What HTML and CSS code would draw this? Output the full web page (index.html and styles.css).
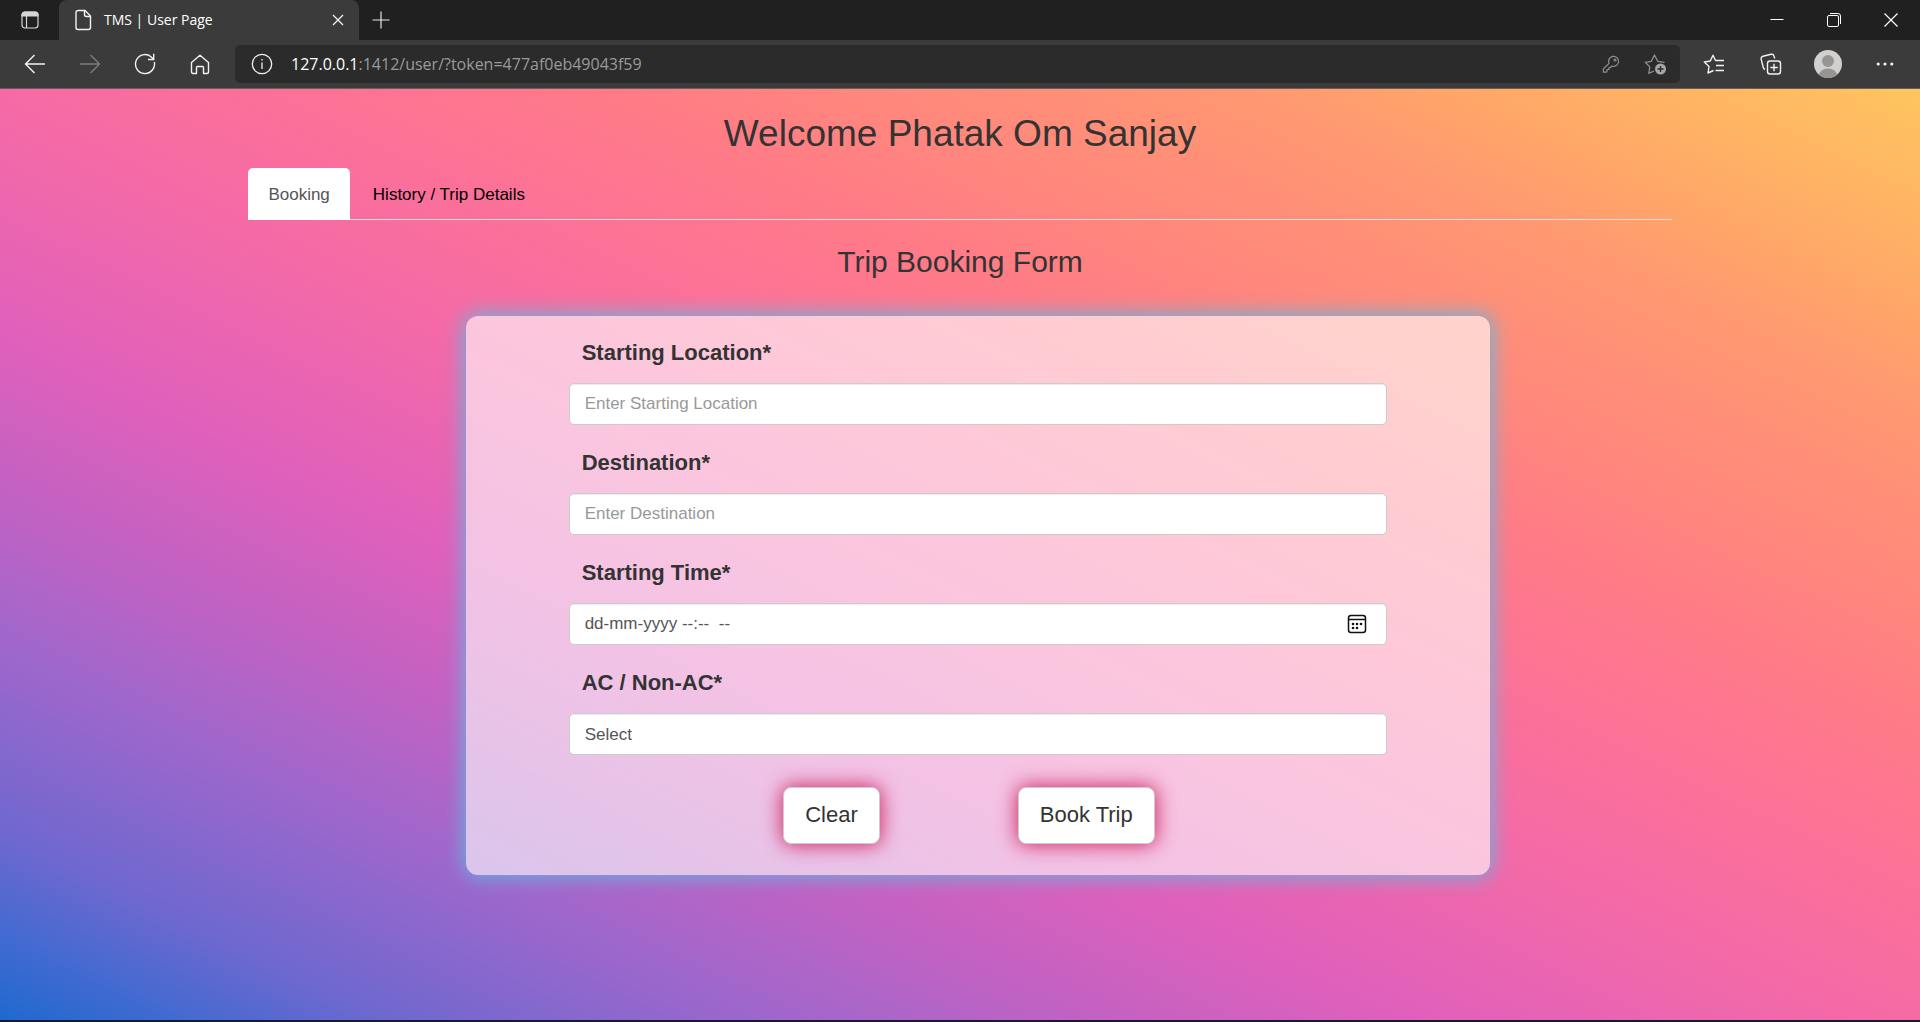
FILE: index.html
```html
<!DOCTYPE html>
<html lang="en">
<head>
<meta charset="utf-8">
<title>TMS | User Page</title>
<meta name="viewport" content="width=device-width, initial-scale=1">
<link rel="stylesheet" href="styles.css">
</head>
<body>
<header class="browser">
  <div class="tabstrip">
    <button class="chrome-btn tab-actions" aria-label="Tab actions">
      <svg width="20" height="20" viewBox="0 0 20 20" fill="none" stroke="#d6d6d6" stroke-width="1.2"><rect x="2" y="2" width="16" height="16" rx="3"/><path d="M2 6V5a3 3 0 0 1 3-3h10a3 3 0 0 1 3 3v1z" fill="#d6d6d6"/><path d="M6.500 6v12"/></svg>
    </button>
    <div class="tab">
      <svg width="18" height="22" viewBox="0 0 18 22" fill="none" stroke="#f2f2f2" stroke-width="1.400"><path d="M4 1.500h7l5.500 5.500v11.500a2 2 0 0 1-2 2H4a2 2 0 0 1-2-2v-15a2 2 0 0 1 2-2z"/><path d="M10.500 1.500v4a2 2 0 0 0 2 2h4"/></svg>
      <span class="tab-title">TMS | User Page</span>
      <button class="chrome-btn tab-close" aria-label="Close tab">
        <svg width="12" height="12" viewBox="0 0 12 12" stroke="#f2f2f2" stroke-width="1.300"><path d="M1 1l10 10M11 1L1 11"/></svg>
      </button>
    </div>
    <button class="chrome-btn new-tab" aria-label="New tab">
      <svg width="18" height="18" viewBox="0 0 18 18" stroke="#e6e6e6" stroke-width="1.200"><path d="M9 .5v17M.5 9h17"/></svg>
    </button>
    <div class="window-controls">
      <button class="chrome-btn" aria-label="Minimize"><svg width="14" height="14" viewBox="0 0 14 14" stroke="#fff"><path d="M.5 6.500h13"/></svg></button>
      <button class="chrome-btn" aria-label="Restore"><svg width="14" height="14" viewBox="0 0 14 14" fill="none" stroke="#fff"><rect x=".5" y="2.500" width="11" height="11" rx="1.500"/><path d="M3 .5h8a2.500 2.500 0 0 1 2.500 2.500v8"/></svg></button>
      <button class="chrome-btn" aria-label="Close"><svg width="14" height="14" viewBox="0 0 14 14" stroke="#fff" stroke-width="1.200"><path d="M.5.5l13 13M13.500.5L.5 13.500"/></svg></button>
    </div>
  </div>
  <div class="toolbar">
    <div class="nav-buttons">
      <button class="chrome-btn" aria-label="Back"><svg width="22" height="20" viewBox="0 0 22 20" fill="none" stroke="#f2f2f2" stroke-width="1.400"><path d="M10.500 1L1.500 10l9 9M1.500 10H21"/></svg></button>
      <button class="chrome-btn" aria-label="Forward"><svg width="22" height="20" viewBox="0 0 22 20" fill="none" stroke="#7c7c7c" stroke-width="1.400"><path d="M11.500 1l9 9-9 9M20.500 10H1"/></svg></button>
      <button class="chrome-btn" aria-label="Refresh"><svg width="22" height="22" viewBox="0 0 22 22" fill="none" stroke="#f2f2f2" stroke-width="1.400"><path d="M20.300 9A9.500 9.500 0 1 1 17 3.700l2.500 2.500"/><path d="M19.700.8v5.700H14"/></svg></button>
      <button class="chrome-btn" aria-label="Home"><svg width="20" height="21" viewBox="0 0 20 21" fill="none" stroke="#f2f2f2" stroke-width="1.400" stroke-linejoin="round"><path d="M1.500 8.500L10 1.300l8.500 7.200V18a1.500 1.500 0 0 1-1.500 1.500h-3.500v-6a1 1 0 0 0-1-1h-5a1 1 0 0 0-1 1v6H3A1.500 1.500 0 0 1 1.500 18z"/></svg></button>
    </div>
    <div class="address">
      <svg width="22" height="22" viewBox="0 0 22 22" fill="none" stroke="#f2f2f2" stroke-width="1.300"><circle cx="11" cy="11" r="9.700"/><path d="M11 9.500v6.500M11 6v1.600"/></svg>
      <div class="url"><span class="url-host">127.0.0.1</span>:1412/user/?token=477af0eb49043f59</div>
      <button class="chrome-btn" aria-label="Saved passwords"><svg width="18" height="18" viewBox="0 0 18 18" fill="none" stroke="#8f8f8f" stroke-width="1.200" stroke-linejoin="round"><path d="M7 8.300A5 5 0 1 1 9.900 11L8.500 12.500H7v2H5v2l-.8.700H1.300V14z"/><circle cx="13" cy="5" r="1"/></svg></button>
      <button class="chrome-btn" aria-label="Add to favorites"><svg width="24" height="22" viewBox="0 0 24 22" fill="none" stroke="#8f8f8f" stroke-width="1.300" stroke-linejoin="round"><path d="M10 18l-5.200 2.300 1-6.400L1.300 9.300l6-1L10.500 2l3.200 6.300 6.800 1"/><circle cx="16.500" cy="16" r="5.500" fill="#a6a6a6" stroke="none"/><path d="M16.500 13v6M13.500 16h6" stroke="#2b2b2b"/></svg></button>
    </div>
    <div class="toolbar-actions">
      <button class="chrome-btn" aria-label="Favorites"><svg width="22" height="20" viewBox="0 0 22 20" fill="none" stroke="#f2f2f2" stroke-width="1.400" stroke-linejoin="round"><path d="M10.500 16.500L5 19l1-6.500L1.300 8l6-1L10 1.300 12.500 6.500H21M13 11.500h8M12.500 16.500H21"/></svg></button>
      <button class="chrome-btn" aria-label="Collections"><svg width="22" height="22" viewBox="0 0 22 22" fill="none" stroke="#f2f2f2" stroke-width="1.400"><rect x="7.500" y="8" width="13" height="13" rx="2.500"/><path d="M14 10.800v7.400M10.300 14.500h7.400"/><path d="M5 16.500a3 3 0 0 1-1.700-2L1.200 6.400A2.500 2.500 0 0 1 3 3.300l8-2a2.500 2.500 0 0 1 3 1.800l.7 2.400"/></svg></button>
      <button class="chrome-btn" aria-label="Profile"><svg width="28" height="28" viewBox="0 0 28 28"><clipPath id="face"><circle cx="14" cy="14" r="14"/></clipPath><g clip-path="url(#face)"><rect width="28" height="28" fill="#d2d0ce"/><circle cx="14" cy="11" r="6" fill="#979593"/><ellipse cx="14" cy="26" rx="9.500" ry="7.500" fill="#979593"/></g></svg></button>
      <button class="chrome-btn" aria-label="Settings and more"><svg width="18" height="4" viewBox="0 0 18 4" fill="#f2f2f2"><circle cx="2.200" cy="2" r="1.600"/><circle cx="9" cy="2" r="1.600"/><circle cx="15.800" cy="2" r="1.600"/></svg></button>
    </div>
  </div>
</header>
<main class="page">
  <div class="container">
    <h1 class="welcome">Welcome Phatak Om Sanjay</h1>
    <nav class="tabs">
      <a class="tabs-link tabs-link-active" href="#booking">Booking</a>
      <a class="tabs-link" href="#history">History / Trip Details</a>
    </nav>
    <h2 class="form-title" id="booking">Trip Booking Form</h2>
    <form class="card">
      <div class="field">
        <label for="start">Starting Location*</label>
        <input class="control" id="start" type="text" placeholder="Enter Starting Location">
      </div>
      <div class="field">
        <label for="destination">Destination*</label>
        <input class="control" id="destination" type="text" placeholder="Enter Destination">
      </div>
      <div class="field">
        <label for="time">Starting Time*</label>
        <div class="control date-control">
          <input class="date-input" id="time" type="text" value="dd-mm-yyyy --:--&nbsp; --">
          <button class="date-button" type="button" aria-label="Show calendar"><svg width="20" height="20" viewBox="0 0 20 20" fill="none" stroke="#111" stroke-width="1.500"><rect x="1.500" y="1.500" width="17" height="17" rx="2.500"/><path d="M1.500 5.500h17"/><g fill="#111" stroke="none"><circle cx="6" cy="10" r="1.300"/><circle cx="10" cy="10" r="1.300"/><circle cx="14" cy="10" r="1.300"/><circle cx="6" cy="14" r="1.300"/><circle cx="10" cy="14" r="1.300"/></g></svg></button>
        </div>
      </div>
      <div class="field">
        <label for="ac">AC / Non-AC*</label>
        <select class="control" id="ac"><option>Select</option><option>AC</option><option>Non-AC</option></select>
      </div>
      <div class="actions">
        <button class="action" type="reset">Clear</button>
        <button class="action" type="submit">Book Trip</button>
      </div>
    </form>
  </div>
</main>
</body>
</html>
```
FILE: styles.css
```css
* { box-sizing: border-box; }

body {
  margin: 0;
  min-height: 100vh;
  display: flex;
  flex-direction: column;
  font-family: "Liberation Sans", Arial, sans-serif;
  font-size: 17px;
  color: #333;
}

button, input, select { font: inherit; color: inherit; }

/* Browser frame */
.browser {
  font-family: "Open Sans", "Segoe UI", sans-serif;
  background: #3b3b3b;
  border-bottom: 1px solid #6b5a5f;
}

.chrome-btn {
  display: flex;
  align-items: center;
  justify-content: center;
  padding: 0;
  border: 0;
  background: none;
}

.tabstrip {
  display: flex;
  height: 40px;
  background: #202020;
}

.tab-actions { width: 59px; }

.tab {
  display: flex;
  align-items: center;
  width: 300px;
  padding: 0 14px 0 15px;
  border-radius: 8px 8px 0 0;
  background: #3b3b3b;
}

.tab-title {
  flex: 1;
  margin-left: 12px;
  padding-bottom: 2px;
  font-size: 14px;
  color: #fff;
}

.tab-close { width: 14px; height: 40px; }
.new-tab { width: 43px; }

.window-controls {
  display: flex;
  margin-left: auto;
  padding-right: 1px;
}

.window-controls .chrome-btn { width: 57px; }

.toolbar {
  display: flex;
  align-items: center;
  height: 48px;
}

.nav-buttons {
  display: flex;
  padding: 0 8px 0 7px;
}

.nav-buttons .chrome-btn { width: 55px; }

.address {
  display: flex;
  flex: 1;
  align-items: center;
  height: 38px;
  padding: 0 12px 0 16px;
  border-radius: 5px;
  background: #2b2b2b;
}

.address .chrome-btn { margin-left: 24px; }

.url {
  flex: 1;
  margin-left: 18px;
  padding-bottom: 1px;
  font-size: 16px;
  color: #9a9a9a;
}

.url-host { color: #fff; }

.toolbar-actions {
  display: flex;
  padding: 0 7px 0 5px;
}

.toolbar-actions .chrome-btn { width: 57px; }

/* Page */
.page {
  flex: 1;
  padding: 23px 12%;
  border-bottom: 2px solid #151a33;
  background: linear-gradient(to top right, #1f69ce 0%, #456ad1 5%, #6e68cf 10%, #9e67cc 20%, #c062c3 28%, #e060bb 37%, #f56aa6 49%, #fc7198 57%, #ff7a88 65%, #ff857e 71%, #ff9772 82%, #ffa768 88%, #ffc55f 100%);
}

.container { padding: 0 18px; }

.welcome, .form-title {
  margin: 0;
  font-weight: 400;
  text-align: center;
}

.welcome {
  font-size: 37px;
  line-height: 44px;
}

.tabs {
  display: flex;
  gap: 3px;
  margin-top: 12px;
  border-bottom: 1px solid #ddd;
}

.tabs-link {
  padding: 13px 20px 11px;
  line-height: 27px;
  border-radius: 5px 5px 0 0;
  color: #000;
  text-decoration: none;
}

.tabs-link-active {
  margin-bottom: -1px;
  background: #fff;
  color: #555;
}

.form-title {
  margin-top: 24px;
  font-size: 30px;
  line-height: 36px;
}

.card {
  width: 72%;
  margin: 36px 0 0 calc(14% + 18px);
  padding: 21px 103px 31px;
  border-radius: 12px;
  background: rgba(255, 255, 255, 0.62);
  box-shadow: 0 0 20px 2px #66b4e0;
}

.field {
  display: flex;
  flex-direction: column;
  gap: 14px;
  margin-bottom: 22px;
}

.field label {
  padding-left: 13px;
  font-size: 22px;
  font-weight: 700;
  line-height: 32px;
}

.control {
  width: 100%;
  height: 42px;
  padding: 0 15px;
  border: 1px solid #ccc;
  border-radius: 5px;
  background: #fff;
  color: #555;
  box-shadow: inset 0 1px 1px rgba(0, 0, 0, 0.08);
  appearance: none;
}

.control::placeholder { color: #999; opacity: 1; }

.date-control {
  display: flex;
  align-items: center;
}

.date-input {
  flex: 1;
  padding: 0;
  border: 0;
  background: none;
}

.date-button {
  display: flex;
  padding: 0 4px;
  border: 0;
  background: none;
}

.actions {
  display: flex;
  justify-content: center;
  gap: 138px;
  margin-top: 32px;
  padding-right: 18px;
}

.action {
  height: 57px;
  padding: 0 21px 2px;
  border: 1px solid #ccc;
  border-radius: 8px;
  background: #fff;
  font-size: 22px;
  box-shadow: 0 0 20px 1px #d02563;
}
```
